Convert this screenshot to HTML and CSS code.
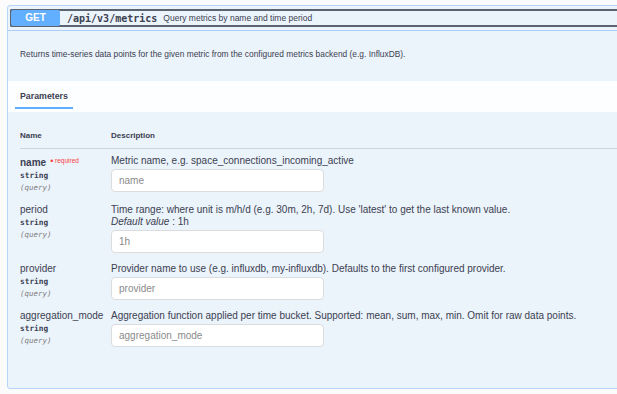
FILE: index.html
```html
<!DOCTYPE html>
<html lang="en">
<head>
    <meta charset="UTF-8">
    <meta name="viewport" content="width=device-width, initial-scale=1.0">
    <title>GET /api/v3/metrics</title>
    <link rel="stylesheet" href="styles.css">
</head>
<body>

    <div class="opblock">
        <div class="summary">
            <div class="summary-control">
                <span class="method">GET</span>
                <span class="path">/api/v3/metrics</span>
                <span class="summary-desc">Query metrics by name and time period</span>
            </div>
        </div>

        <div class="op-description">
            <p>Returns time-series data points for the given metric from the configured metrics backend (e.g. InfluxDB).</p>
        </div>

        <div class="section-header">
            <h4 class="tab">Parameters</h4>
        </div>

        <div class="params">
            <div class="params-head">
                <div class="col-name">Name</div>
                <div class="col-desc">Description</div>
            </div>

            <div class="param-row">
                <div class="col-name">
                    <div class="param-name">name<span class="required"><span class="dot">&bull;</span> required</span></div>
                    <div class="param-type">string</div>
                    <div class="param-in">(query)</div>
                </div>
                <div class="col-desc">
                    <p>Metric name, e.g. space_connections_incoming_active</p>
                    <input type="text" placeholder="name">
                </div>
            </div>

            <div class="param-row">
                <div class="col-name">
                    <div class="param-name plain">period</div>
                    <div class="param-type">string</div>
                    <div class="param-in">(query)</div>
                </div>
                <div class="col-desc">
                    <p>Time range: where unit is m/h/d (e.g. 30m, 2h, 7d). Use 'latest' to get the last known value.</p>
                    <p class="default"><i>Default value</i> : 1h</p>
                    <input type="text" placeholder="1h">
                </div>
            </div>

            <div class="param-row">
                <div class="col-name">
                    <div class="param-name plain">provider</div>
                    <div class="param-type">string</div>
                    <div class="param-in">(query)</div>
                </div>
                <div class="col-desc">
                    <p>Provider name to use (e.g. influxdb, my-influxdb). Defaults to the first configured provider.</p>
                    <input type="text" placeholder="provider">
                </div>
            </div>

            <div class="param-row">
                <div class="col-name">
                    <div class="param-name plain">aggregation_mode</div>
                    <div class="param-type">string</div>
                    <div class="param-in">(query)</div>
                </div>
                <div class="col-desc">
                    <p>Aggregation function applied per time bucket. Supported: mean, sum, max, min. Omit for raw data points.</p>
                    <input type="text" placeholder="aggregation_mode">
                </div>
            </div>
        </div>
    </div>

</body>
</html>
```

FILE: styles.css
```css
body {
    font-family: "Liberation Sans", Arial, sans-serif;
    margin: 0;
    padding: 5px 0 0 7px;
    background-color: #fbfbfb;
    color: #3b4151;
    overflow: hidden;
    height: 394px;
    box-sizing: border-box;
}
.opblock {
    width: 650px;
    height: 384px;
    box-sizing: border-box;
    background-color: #ebf3fb;
    border: 1px solid #b4d5f8;
    border-radius: 3px;
}
.summary {
    padding: 3px 0 3px 2px;
    border-bottom: 1px solid #a9cdf5;
}
.summary-control {
    display: flex;
    align-items: center;
    height: 14px;
    border: 2px solid #5b6270;
    border-right: none;
    border-radius: 2px 0 0 2px;
}
.method {
    width: 49px;
    height: 16px;
    line-height: 16px;
    background-color: #61affe;
    color: white;
    font-weight: bold;
    font-size: 10px;
    text-align: center;
    border-radius: 2px;
    margin-left: -1px;
}
.path {
    font-family: "DejaVu Sans Mono", monospace;
    font-weight: bold;
    font-size: 10px;
    margin-left: 7px;
}
.summary-desc {
    font-size: 8.5px;
    margin-left: 6px;
}
.op-description {
    padding: 17px 12px 0;
    height: 33px;
}
.op-description p {
    margin: 0;
    font-size: 8.4px;
    line-height: 12px;
}
.section-header {
    background-color: rgba(255, 255, 255, 0.85);
    height: 31px;
    padding-left: 7px;
}
.tab {
    display: inline-block;
    margin: 0;
    padding: 9px 5px 0;
    height: 17px;
    font-size: 8.8px;
    line-height: 12px;
    border-bottom: 2px solid #61affe;
}
.params {
    padding: 18px 0 0 12px;
}
.params-head {
    display: flex;
    font-size: 8px;
    font-weight: bold;
    line-height: 12px;
    padding-bottom: 6px;
    border-bottom: 1px solid #cdd5df;
}
.col-name {
    width: 91px;
    flex-shrink: 0;
}
.col-desc {
    flex: 1;
}
.param-row {
    display: flex;
    padding: 5px 0 4px;
}
.param-name {
    font-size: 10px;
    font-weight: bold;
    line-height: 14px;
}
.param-name.plain {
    font-weight: normal;
}
.required {
    color: #f93e3e;
    font-size: 6.5px;
    font-weight: normal;
    vertical-align: 3px;
    margin-left: 4px;
}
.dot {
    font-size: 9px;
    vertical-align: -1px;
}
.param-type {
    font-family: "DejaVu Sans Mono", monospace;
    font-weight: bold;
    font-size: 7.8px;
    line-height: 12px;
}
.param-in {
    font-family: "DejaVu Sans Mono", monospace;
    font-style: italic;
    font-size: 7.5px;
    line-height: 12px;
    color: #808080;
}
.col-desc p {
    margin: 0;
    font-size: 10px;
    line-height: 13px;
}
.col-desc p.default {
    line-height: 12px;
}
.col-desc input {
    display: block;
    width: 213px;
    height: 23px;
    box-sizing: border-box;
    margin-top: 2px;
    padding: 0 7px;
    border: 1px solid #dcdcdc;
    border-radius: 4px;
    background: white;
    font-family: "Liberation Sans", Arial, sans-serif;
    font-size: 10px;
    color: #3b4151;
}
.col-desc input::placeholder {
    color: #8a8a8a;
}
```
